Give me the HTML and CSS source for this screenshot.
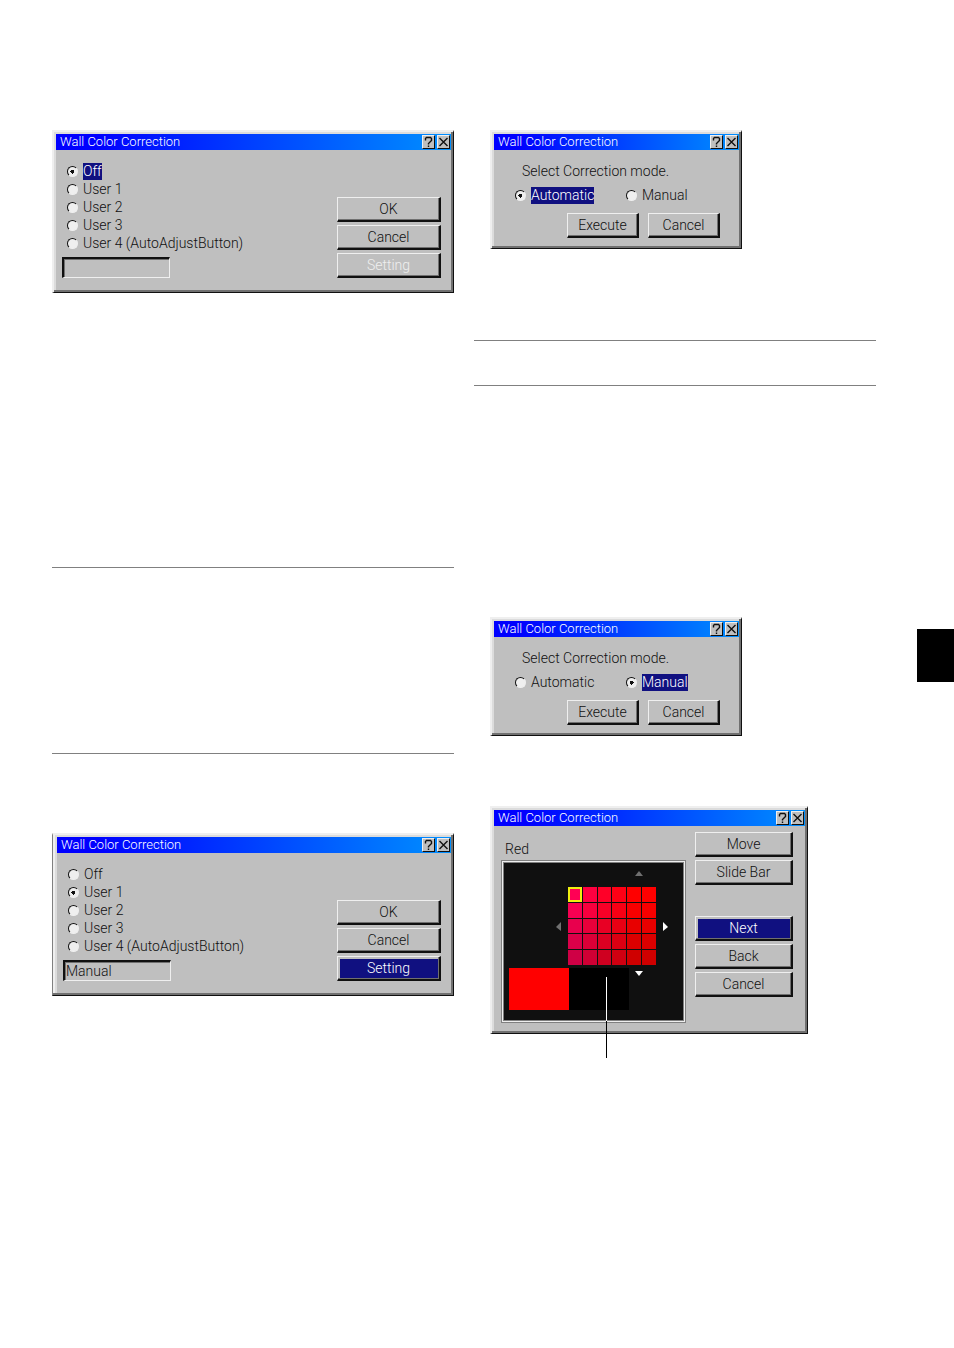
FILE: index.html
```html
<!DOCTYPE html>
<html lang="en">
<head>
  <meta charset="UTF-8" />
  <meta name="viewport" content="width=device-width, initial-scale=1.0" />
  <title>Wall Color Correction</title>
  <link rel="stylesheet" href="styles.css">
</head>
<body>
  <main class="page">
    <div class="column">
      <form class="dialog">
        <header class="titlebar">
          <h2>Wall Color Correction</h2>
          <button type="button" class="tool" aria-label="Help"><svg viewBox="0 0 11 12"><path d="M2.5 4.5v-2l1-1h4l1 1v2l-3 3v1M5.500 9.500v1.500" /></svg></button>
          <button type="button" class="tool" aria-label="Close"><svg viewBox="0 0 11 12"><path d="M1.500 2l8 8M9.500 2l-8 8" /></svg></button>
        </header>
        <div class="user-body">
          <div class="choices">
            <label class="choice"><input type="radio" name="user-a" checked><span class="focused">Off</span></label>
            <label class="choice"><input type="radio" name="user-a"><span>User 1</span></label>
            <label class="choice"><input type="radio" name="user-a"><span>User 2</span></label>
            <label class="choice"><input type="radio" name="user-a"><span>User 3</span></label>
            <label class="choice"><input type="radio" name="user-a"><span>User 4 (AutoAdjustButton)</span></label>
            <input type="text" class="mode" aria-label="Mode" readonly>
          </div>
          <div class="buttons">
            <button type="button" class="btn">OK</button>
            <button type="button" class="btn">Cancel</button>
            <button type="button" class="btn" disabled>Setting</button>
          </div>
        </div>
      </form>

      <hr class="rule rule-note">
      <hr class="rule rule-note-end">

      <form class="dialog dialog-edge">
        <header class="titlebar">
          <h2>Wall Color Correction</h2>
          <button type="button" class="tool" aria-label="Help"><svg viewBox="0 0 11 12"><path d="M2.5 4.5v-2l1-1h4l1 1v2l-3 3v1M5.500 9.500v1.500" /></svg></button>
          <button type="button" class="tool" aria-label="Close"><svg viewBox="0 0 11 12"><path d="M1.500 2l8 8M9.500 2l-8 8" /></svg></button>
        </header>
        <div class="user-body">
          <div class="choices">
            <label class="choice"><input type="radio" name="user-b"><span>Off</span></label>
            <label class="choice"><input type="radio" name="user-b" checked><span>User 1</span></label>
            <label class="choice"><input type="radio" name="user-b"><span>User 2</span></label>
            <label class="choice"><input type="radio" name="user-b"><span>User 3</span></label>
            <label class="choice"><input type="radio" name="user-b"><span>User 4 (AutoAdjustButton)</span></label>
            <input type="text" class="mode" aria-label="Mode" value="Manual" readonly>
          </div>
          <div class="buttons">
            <button type="button" class="btn">OK</button>
            <button type="button" class="btn">Cancel</button>
            <button type="button" class="btn selected">Setting</button>
          </div>
        </div>
      </form>
    </div>

    <div class="column column-right">
      <form class="dialog dialog-mode">
        <header class="titlebar">
          <h2>Wall Color Correction</h2>
          <button type="button" class="tool" aria-label="Help"><svg viewBox="0 0 11 12"><path d="M2.5 4.5v-2l1-1h4l1 1v2l-3 3v1M5.500 9.500v1.500" /></svg></button>
          <button type="button" class="tool" aria-label="Close"><svg viewBox="0 0 11 12"><path d="M1.500 2l8 8M9.500 2l-8 8" /></svg></button>
        </header>
        <div class="mode-body">
          <p>Select Correction mode.</p>
          <div class="mode-row">
            <label class="choice"><input type="radio" name="mode-a" checked><span class="focused">Automatic</span></label>
            <label class="choice"><input type="radio" name="mode-a"><span>Manual</span></label>
          </div>
          <div class="mode-buttons">
            <button type="button" class="btn">Execute</button>
            <button type="button" class="btn">Cancel</button>
          </div>
        </div>
      </form>

      <hr class="rule rule-head">
      <hr class="rule rule-head-end">

      <form class="dialog dialog-mode dialog-manual">
        <header class="titlebar">
          <h2>Wall Color Correction</h2>
          <button type="button" class="tool" aria-label="Help"><svg viewBox="0 0 11 12"><path d="M2.5 4.5v-2l1-1h4l1 1v2l-3 3v1M5.500 9.500v1.500" /></svg></button>
          <button type="button" class="tool" aria-label="Close"><svg viewBox="0 0 11 12"><path d="M1.500 2l8 8M9.500 2l-8 8" /></svg></button>
        </header>
        <div class="mode-body">
          <p>Select Correction mode.</p>
          <div class="mode-row">
            <label class="choice"><input type="radio" name="mode-b"><span>Automatic</span></label>
            <label class="choice"><input type="radio" name="mode-b" checked><span class="focused">Manual</span></label>
          </div>
          <div class="mode-buttons">
            <button type="button" class="btn">Execute</button>
            <button type="button" class="btn">Cancel</button>
          </div>
        </div>
      </form>

      <form class="dialog dialog-color">
        <header class="titlebar">
          <h2>Wall Color Correction</h2>
          <button type="button" class="tool" aria-label="Help"><svg viewBox="0 0 11 12"><path d="M2.5 4.5v-2l1-1h4l1 1v2l-3 3v1M5.500 9.500v1.500" /></svg></button>
          <button type="button" class="tool" aria-label="Close"><svg viewBox="0 0 11 12"><path d="M1.500 2l8 8M9.500 2l-8 8" /></svg></button>
        </header>
        <div class="color-body">
          <div class="picker">
            <p>Red</p>
            <div class="panel">
              <svg class="arrow-v arrow-up" viewBox="0 0 8 5"><path d="M0 5h8L4 0z" /></svg>
              <div class="map">
                <svg class="arrow-h dim" viewBox="0 0 5 9"><path d="M5 0v9L0 5z" /></svg>
                <div class="cells">
                  <div class="cell-row"><i class="picked"></i><i></i><i></i><i></i><i></i><i></i></div>
                  <div class="cell-row"><i></i><i></i><i></i><i></i><i></i><i></i></div>
                  <div class="cell-row"><i></i><i></i><i></i><i></i><i></i><i></i></div>
                  <div class="cell-row"><i></i><i></i><i></i><i></i><i></i><i></i></div>
                  <div class="cell-row"><i></i><i></i><i></i><i></i><i></i><i></i></div>
                </div>
                <svg class="arrow-h" viewBox="0 0 5 9"><path d="M0 0v9l5-4z" /></svg>
              </div>
              <div class="samples">
                <div class="sample sample-red"></div>
                <div class="sample sample-black"></div>
                <svg class="arrow-v" viewBox="0 0 8 5"><path d="M0 0h8L4 5z" /></svg>
              </div>
              <div class="leader"></div>
            </div>
          </div>
          <div class="color-buttons">
            <button type="button" class="btn">Move</button>
            <button type="button" class="btn">Slide Bar</button>
            <button type="button" class="btn selected next">Next</button>
            <button type="button" class="btn">Back</button>
            <button type="button" class="btn">Cancel</button>
          </div>
        </div>
      </form>
    </div>

    <div class="thumb-tab"></div>
  </main>
</body>
</html>
```
FILE: styles.css
```css
* {
  margin: 0;
  padding: 0;
  box-sizing: border-box;
}

body {
  background: #fff;
  color: #101010;
  font: 300 14px/18px Roboto, sans-serif;
}

.page {
  display: grid;
  grid-template-columns: 1fr 1fr 58px;
  column-gap: 20px;
  align-items: start;
  padding: 130px 0 60px 52px;
}

.dialog {
  background: #bfbfbf;
  border-style: solid;
  border-width: 2px 1px 1px 2px;
  border-color: #efefef #101010 #101010 #efefef;
  box-shadow: inset -2px -2px #707070, inset 2px 2px #dcdcdc;
  padding: 2px;
}

.dialog-edge {
  margin-top: 79px;
  padding-left: 4px;
  border-left: 1px solid #808080;
  box-shadow: inset -2px -2px #707070, inset 2px 0 #efefef, inset 4px 2px #dcdcdc;
}

.titlebar {
  display: flex;
  align-items: center;
  gap: 2px;
  height: 16px;
  padding: 0 1px 0 4px;
  background: linear-gradient(to right, #00f 10%, #0090ff);
}

.titlebar h2 {
  flex: 1;
  font: inherit;
  font-size: 13px;
  line-height: 16px;
  color: #fff;
}

.tool {
  width: 13px;
  height: 14px;
  background: #bfbfbf;
  border: 1px solid;
  border-color: #efefef #101010 #101010 #efefef;
}

.tool svg {
  display: block;
  width: 11px;
  height: 12px;
  fill: none;
  stroke: #101010;
  stroke-width: 1.4;
}

.user-body {
  display: flex;
  justify-content: space-between;
  align-items: flex-end;
  padding: 12px 10px 12px 6px;
}

.choices {
  display: flex;
  flex-direction: column;
}

.choice {
  display: flex;
  align-items: center;
  gap: 5px;
  height: 18px;
  padding-left: 5px;
}

.choice span {
  line-height: 17px;
}

.choice .focused {
  background: #101080;
  color: #fff;
}

input[type="radio"] {
  appearance: none;
  width: 11px;
  height: 11px;
  border: 1px solid;
  border-color: #101010 #efefef #efefef #101010;
  border-radius: 50%;
  background: #efefef;
}

input[type="radio"]:checked {
  background: radial-gradient(circle, #101010 2px, #efefef 2px);
}

.mode {
  width: 108px;
  height: 21px;
  margin-top: 5px;
  padding-left: 1px;
  background: #bfbfbf;
  border-style: solid;
  border-width: 2px 1px 1px 2px;
  border-color: #101010 #efefef #efefef #101010;
  box-shadow: inset 1px 1px #707070;
  font: inherit;
  color: #101010;
}

.buttons {
  display: flex;
  flex-direction: column;
  gap: 3px;
  width: 104px;
}

.btn {
  height: 25px;
  background: #bfbfbf;
  border-style: solid;
  border-width: 1px 2px 2px 1px;
  border-color: #efefef #101010 #101010 #efefef;
  box-shadow: inset -1px -1px #707070;
  font: inherit;
  color: #101010;
}

.btn:disabled {
  color: #efefef;
}

.btn.selected {
  background: #101080;
  box-shadow: inset -1px -1px #707070, inset 2px 2px #bfbfbf;
  color: #fff;
}

.rule {
  border: 0;
  height: 1px;
  background: #808080;
}

.rule-note {
  margin-top: 274px;
}

.rule-note-end {
  margin-top: 185px;
}

.rule-head {
  margin-top: 91px;
}

.rule-head-end {
  margin-top: 44px;
}

.column-right .dialog {
  margin-left: 16px;
}

.dialog-mode {
  max-width: 252px;
}

.dialog-manual {
  margin-top: 231px;
}

.mode-body {
  padding: 12px 19px 8px 20px;
}

.mode-body p {
  padding-left: 8px;
}

.mode-row {
  display: grid;
  grid-template-columns: 111px 1fr;
  margin-top: 6px;
  margin-left: -4px;
}

.mode-buttons {
  display: flex;
  justify-content: flex-end;
  gap: 9px;
  margin-top: 9px;
}

.mode-buttons .btn {
  width: 72px;
}

.dialog-color {
  max-width: 318px;
  margin-top: 70px;
}

.color-body {
  display: flex;
  justify-content: space-between;
  padding: 6px 12px 8px 7px;
}

.picker p {
  margin-top: 8px;
  padding-left: 4px;
}

.panel {
  position: relative;
  width: 185px;
  height: 163px;
  margin-top: 2px;
  padding: 10px 0 0 7px;
  background: #101010;
  border: 1px solid #808080;
  outline: 1px solid #efefef;
  outline-offset: -2px;
  box-shadow: inset 0 0 0 2px #808080;
}

.arrow-v {
  display: block;
  width: 8px;
  height: 5px;
  fill: #fff;
}

.arrow-h {
  width: 5px;
  height: 9px;
  fill: #fff;
}

.arrow-up {
  margin-left: 126px;
  fill: #707070;
}

.dim {
  fill: #707070;
}

.map {
  display: flex;
  align-items: center;
  gap: 7px;
  margin: 11px 0 3px 47px;
}

.cells {
  display: grid;
  grid-template-rows: repeat(5, 1fr);
  gap: 1px;
  width: 88px;
  height: 78px;
}

.cell-row {
  display: grid;
  grid-template-columns: repeat(6, 1fr);
  gap: 1px;
}

.cell-row i:nth-child(1) { background: #ff0055; }
.cell-row i:nth-child(2) { background: #ff0040; }
.cell-row i:nth-child(3) { background: #ff0028; }
.cell-row i:nth-child(4) { background: #ff0015; }
.cell-row i:nth-child(n+5) { background: #ff0000; }

.cell-row:nth-child(2) { filter: brightness(0.97); }
.cell-row:nth-child(3) { filter: brightness(0.91); }
.cell-row:nth-child(4) { filter: brightness(0.86); }
.cell-row:nth-child(5) { filter: brightness(0.81); }

.cell-row .picked {
  border: 2px solid #efef10;
}

.samples {
  display: flex;
}

.samples .arrow-v {
  margin: 3px 0 0 6px;
}

.sample {
  width: 60px;
  height: 42px;
}

.sample-red {
  background: #f00;
}

.sample-black {
  background: #000;
}

/* callout line from the black sample to below the dialog */
.leader {
  position: absolute;
  left: 104px;
  top: 116px;
  width: 1px;
  height: 81px;
  background: linear-gradient(#fff 44px, #000 44px);
}

.color-buttons {
  display: flex;
  flex-direction: column;
  gap: 3px;
  width: 98px;
}

.color-buttons .next {
  margin-top: 28px;
}

.thumb-tab {
  justify-self: end;
  width: 37px;
  height: 53px;
  margin-top: 499px;
  background: #000;
}
```
